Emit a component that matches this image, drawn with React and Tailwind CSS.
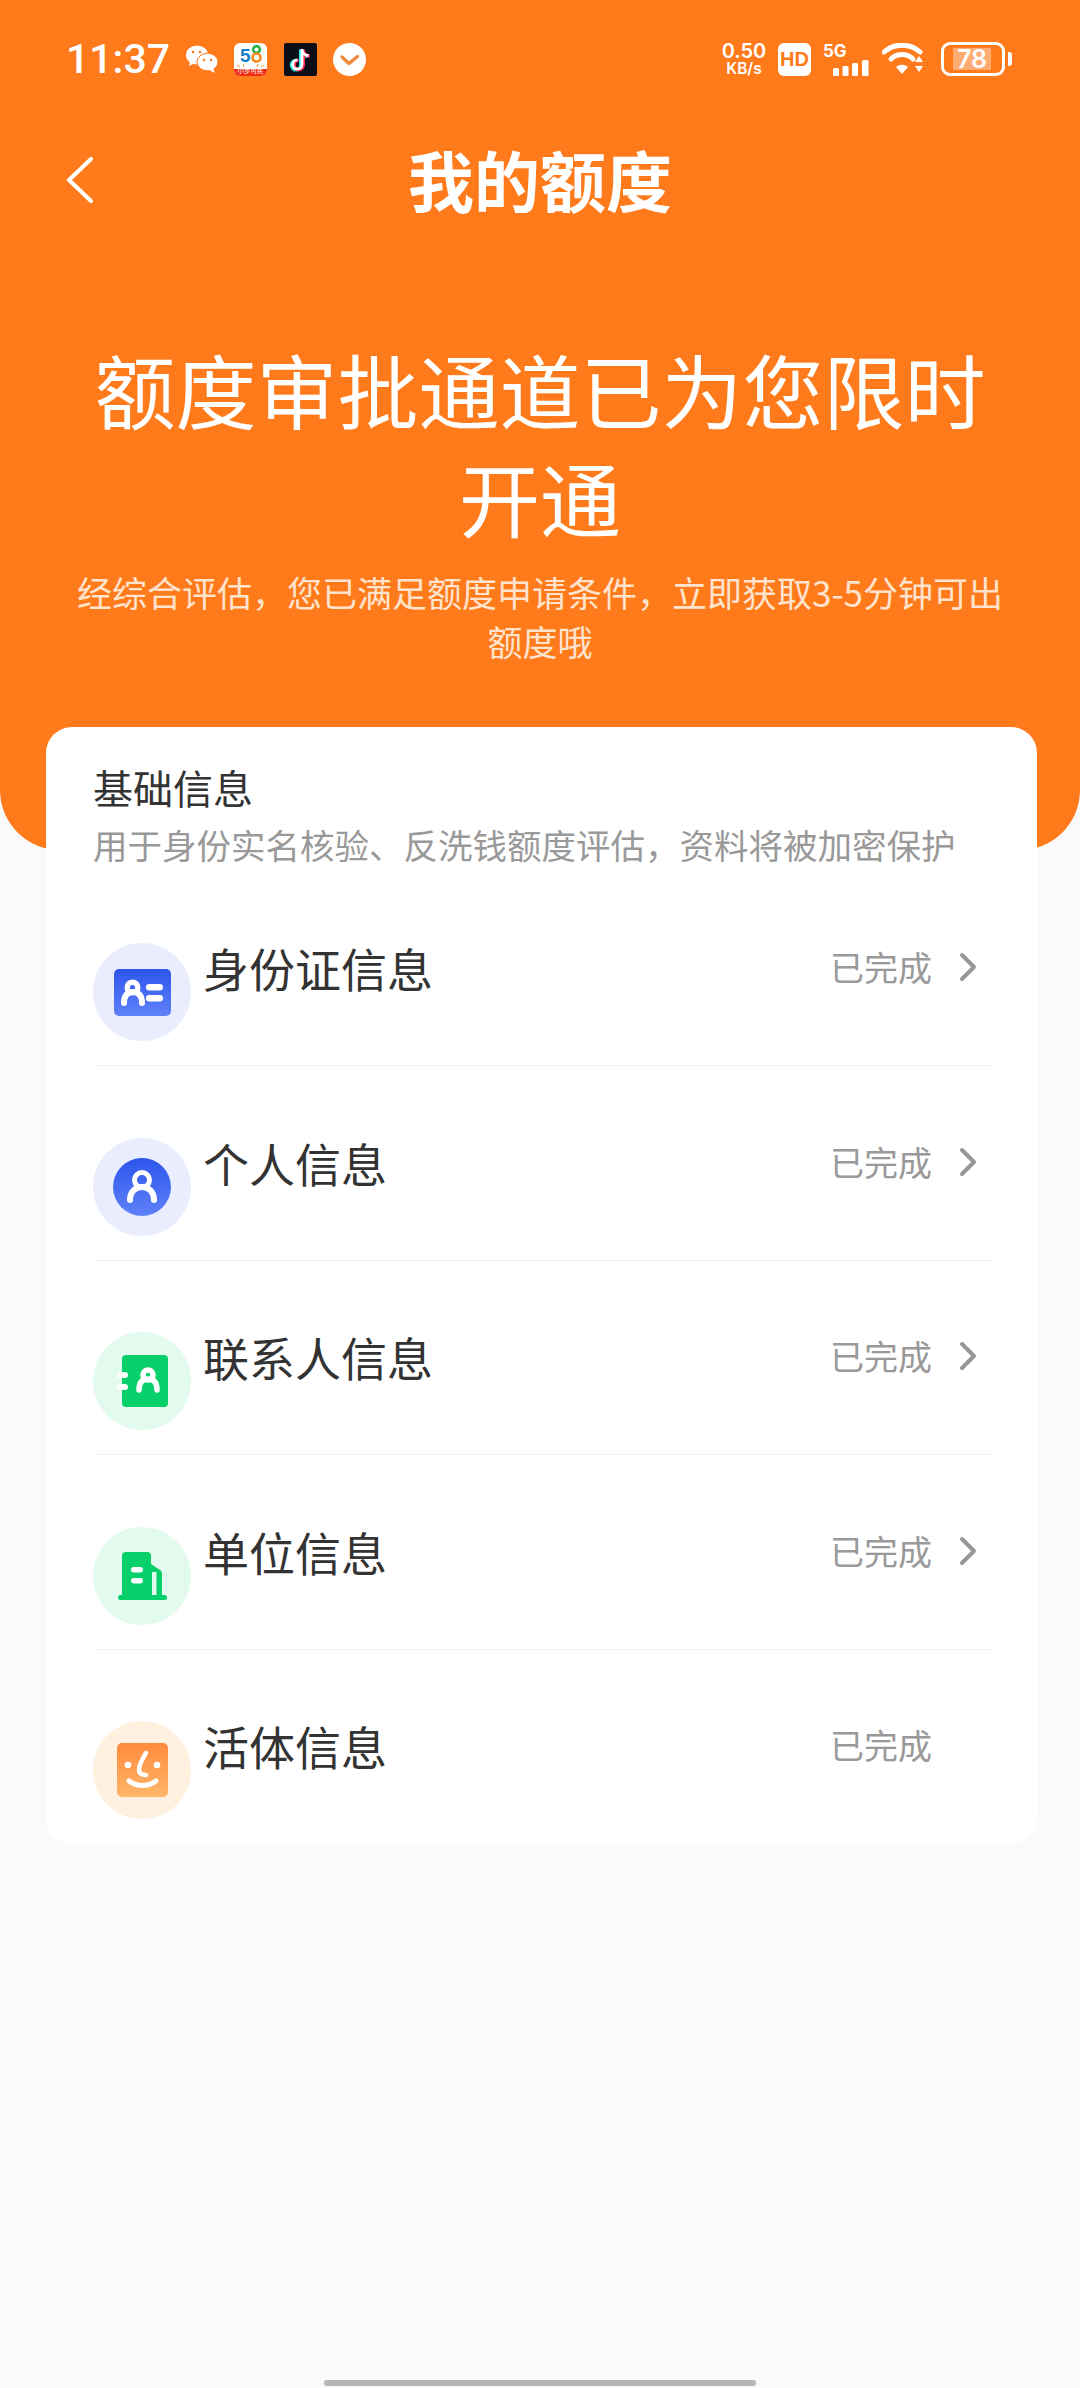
import React from 'react';

const IdIcon = () => (
  <svg width="57" height="47" viewBox="0 0 57 47" className="block">
    <defs>
      <linearGradient id="blueA" x1="0" y1="0" x2="0" y2="1">
        <stop offset="0" stopColor="#2d55ec" />
        <stop offset="1" stopColor="#5f82f9" />
      </linearGradient>
    </defs>
    <rect width="57" height="47" rx="5" fill="url(#blueA)" />
    <circle cx="18.5" cy="18.5" r="5.3" fill="none" stroke="#fff" strokeWidth="5.4" />
    <path d="M10 34c0-7 3-11 9-11s9 4 9 11" fill="none" stroke="#fff" strokeWidth="6" strokeLinecap="round" />
    <rect x="32" y="15" width="17" height="6.5" rx="3.2" fill="#fff" />
    <rect x="32" y="26" width="17" height="6.5" rx="3.2" fill="#fff" />
  </svg>
);

const PersonIcon = () => (
  <svg width="58" height="58" viewBox="0 0 58 58" className="block">
    <defs>
      <linearGradient id="blueB" x1="0" y1="0" x2="0" y2="1">
        <stop offset="0" stopColor="#2d55ec" />
        <stop offset="1" stopColor="#5f82f9" />
      </linearGradient>
    </defs>
    <circle cx="29" cy="29" r="29" fill="url(#blueB)" />
    <circle cx="29" cy="22" r="7.5" fill="none" stroke="#fff" strokeWidth="5" />
    <path d="M17 42c0-8 5-13 12-13s12 5 12 13" fill="none" stroke="#fff" strokeWidth="6" strokeLinecap="round" />
  </svg>
);

const ContactIcon = () => (
  <svg width="52" height="52" viewBox="0 0 52 52" className="block">
    <rect x="6" y="0" width="46" height="52" rx="4" fill="#07d06a" />
    <rect x="1" y="17" width="11" height="6" rx="3" fill="#fff" />
    <rect x="1" y="29" width="11" height="6" rx="3" fill="#fff" />
    <circle cx="32" cy="20" r="5" fill="none" stroke="#fff" strokeWidth="5.5" />
    <path d="M23 35c0-7 3-11 9-11s9 4 9 11" fill="none" stroke="#fff" strokeWidth="5.5" strokeLinecap="round" />
  </svg>
);

const BuildingIcon = () => (
  <svg width="49" height="48" viewBox="0 0 49 48" className="block">
    <path d="M4 4a4 4 0 0 1 4-4h21a4 4 0 0 1 4 4v8l9 6a4 4 0 0 1 2 4v22H4z" fill="#07d06a" />
    <rect x="0" y="43" width="49" height="5" rx="2.5" fill="#07d06a" />
    <rect x="13" y="15" width="12" height="5.5" rx="2.7" fill="#fff" />
    <rect x="13" y="26" width="12" height="5.5" rx="2.7" fill="#fff" />
    <rect x="34" y="20" width="4.5" height="23" fill="#e3fbef" />
  </svg>
);

const FaceIcon = () => (
  <svg width="51" height="54" viewBox="0 0 51 54" className="block">
    <defs>
      <linearGradient id="orangeA" x1="0" y1="0" x2="0" y2="1">
        <stop offset="0" stopColor="#ff8a3d" />
        <stop offset="1" stopColor="#ffb669" />
      </linearGradient>
    </defs>
    <rect width="51" height="54" rx="5" fill="url(#orangeA)" />
    <circle cx="11" cy="22" r="3.3" fill="#fff" />
    <circle cx="40" cy="22" r="3.3" fill="#fff" />
    <path d="M29 10c-3 5-7 11-7 17 0 3 2 5 7 5" fill="none" stroke="#fff" strokeWidth="4.5" strokeLinecap="round" />
    <path d="M12 38c8 6 19 6 27 0" fill="none" stroke="#fff" strokeWidth="5" strokeLinecap="round" />
  </svg>
);

const items = [
  { title: '身份证信息', bg: 'bg-[#e9edfd]', icon: <IdIcon />, arrow: true },
  { title: '个人信息', bg: 'bg-[#e9edfd]', icon: <PersonIcon />, arrow: true },
  { title: '联系人信息', bg: 'bg-[#e3fbef]', icon: <ContactIcon />, arrow: true },
  { title: '单位信息', bg: 'bg-[#e3fbef]', icon: <BuildingIcon />, arrow: true },
  { title: '活体信息', bg: 'bg-[#fff0e0]', icon: <FaceIcon />, arrow: false },
];

const StatusBar = () => (
  <div className="flex h-[36px] items-center justify-between pl-[66px] pr-[68px] text-white">
    <div className="flex items-center">
      <span className="w-[101px] text-[41px] leading-none font-medium font-['Roboto',sans-serif]">11:37</span>
      {/* wechat */}
      <svg width="32" height="30" viewBox="0 0 32 30" className="ml-[19px]">
        <ellipse cx="11" cy="11" rx="11" ry="9.5" fill="#fff" />
        <path d="M4 17l-1 5 6-3z" fill="#fff" />
        <ellipse cx="21.5" cy="18" rx="10.5" ry="8.8" fill="#fff" stroke="#ff7a1b" strokeWidth="1" />
        <path d="M27 24l2 5-6-3z" fill="#fff" />
        <circle cx="7" cy="8" r="1.3" fill="#ff7a1b" />
        <circle cx="14" cy="8" r="1.3" fill="#ff7a1b" />
        <circle cx="18" cy="16" r="1.2" fill="#ff7a1b" />
        <circle cx="25" cy="16" r="1.2" fill="#ff7a1b" />
      </svg>
      {/* 58 app */}
      <svg width="33" height="33" viewBox="0 0 33 33" className="ml-[16px]">
        <rect width="33" height="33" rx="6" fill="#fff" />
        <path d="M0 26h33v1a6 6 0 0 1-6 6H6a6 6 0 0 1-6-6z" fill="#ee2d14" />
        <text x="6" y="19" fontSize="19" fontWeight="700" fill="#1580c8" fontFamily="Liberation Sans, sans-serif">5</text>
        <circle cx="22.5" cy="6.5" r="3.4" fill="none" stroke="#28b34a" strokeWidth="2.6" />
        <circle cx="22.5" cy="14.5" r="4" fill="none" stroke="#f28a1e" strokeWidth="2.6" />
        <path d="M3 22l3 2M30 22l-3 2M9 21l1 3M24 21l-1 3" stroke="#e8a23c" strokeWidth="1" />
        <text x="16.5" y="30" fontSize="6.5" fill="#fff" textAnchor="middle" fontFamily="Noto Sans CJK SC, sans-serif">小步可民</text>
      </svg>
      {/* tiktok */}
      <svg width="33" height="33" viewBox="0 0 33 33" className="ml-[17px]">
        <rect width="33" height="33" rx="2" fill="#0b0d17" />
        <path d="M18 6v15.5a4.6 4.6 0 1 1-4.6-4.6M18 6c0 4 3 6.5 6.5 6.5" fill="none" stroke="#25f4ee" strokeWidth="3.6" transform="translate(-1.2 0.6)" />
        <path d="M18 6v15.5a4.6 4.6 0 1 1-4.6-4.6M18 6c0 4 3 6.5 6.5 6.5" fill="none" stroke="#fe2c55" strokeWidth="3.6" transform="translate(1.2 0.4)" />
        <path d="M18 6v15.5a4.6 4.6 0 1 1-4.6-4.6M18 6c0 4 3 6.5 6.5 6.5" fill="none" stroke="#fff" strokeWidth="2.8" />
      </svg>
      {/* check */}
      <svg width="33" height="33" viewBox="0 0 33 33" className="ml-[16px]">
        <circle cx="16.5" cy="16.5" r="16.5" fill="#fff" />
        <path d="M9 14l7 6.5 8.5-7" fill="none" stroke="#f08a3c" strokeWidth="3.4" strokeLinecap="round" strokeLinejoin="round" />
      </svg>
    </div>
    <div className="flex items-center">
      <div className="flex w-[44px] flex-col items-center font-['Inter',sans-serif] font-semibold">
        <span className="text-[20px] leading-[20px]">0.50</span>
        <span className="text-[15.5px] leading-[16px]">KB/s</span>
      </div>
      <div className="ml-[12px] flex h-[33px] w-[33px] items-center justify-center rounded-[6px] bg-white text-[20px] leading-none font-bold text-[#ff7a1b] font-['Liberation_Sans',sans-serif]">HD</div>
      {/* 5G + signal */}
      <div className="relative ml-[12px] h-[33px] w-[46px]">
        <span className="absolute left-0 top-0 text-[17px] leading-[17px] font-bold font-['Inter',sans-serif]">5G</span>
        <svg width="36" height="16" viewBox="0 0 36 16" className="absolute bottom-0 right-0">
          <rect x="0" y="8" width="6" height="8" rx="1.5" fill="#fff" />
          <rect x="9.5" y="6" width="6" height="10" rx="1.5" fill="#fff" />
          <rect x="19" y="3" width="6" height="13" rx="1.5" fill="#fff" />
          <rect x="29" y="0" width="6.5" height="16" rx="1.5" fill="#fff" />
        </svg>
      </div>
      {/* wifi */}
      <svg width="43" height="32" viewBox="0 0 43 32" className="ml-[13px]">
        <path d="M2 9c10-9 26-9 36 0" fill="none" stroke="#fff" strokeWidth="5" strokeLinecap="round" />
        <path d="M9 16c6-6 16-6 22 0" fill="none" stroke="#fff" strokeWidth="5" strokeLinecap="round" />
        <path d="M14 24c4-3 8-3 12 0l-6 7z" fill="#fff" />
        <path d="M37 13l4 6h-8zM33 23h8l-4 6z" fill="#fff" />
      </svg>
      {/* battery */}
      <div className="ml-[16px] flex items-center">
        <div className="flex h-[34px] w-[64px] items-center rounded-[9px] border-[3px] border-white pl-[9px]">
          <div className="flex h-[22px] w-[38px] items-center justify-center bg-[#ffac73] text-[25px] leading-none font-semibold font-['Inter',sans-serif]">78</div>
        </div>
        <div className="ml-[3px] h-[14px] w-[4px] rounded-r-[3px] bg-white" />
      </div>
    </div>
  </div>
);

export default function App() {
  return (
    <div className="relative flex min-h-[2388px] flex-col bg-[#fafafa] font-['Noto_Sans_CJK_SC','Noto_Sans',sans-serif]">
      {/* Orange header */}
      <div className="h-[850px] rounded-b-[60px] bg-[#ff7a1b] pt-[41px] text-white">
        <StatusBar />
        <div className="relative mt-[54px] flex h-[94px] items-center justify-center">
          <svg width="28" height="46" viewBox="0 0 28 46" className="absolute left-[66px] top-[26px]">
            <path d="M25 2L3 23l22 21" fill="none" stroke="#fff" strokeWidth="4" strokeLinecap="round" strokeLinejoin="round" />
          </svg>
          <h1 className="text-[66px] leading-none font-bold">我的额度</h1>
        </div>
        <div className="mt-[109px] px-[60px] text-center">
          <h2 className="px-[20px] text-[81px] leading-[108px] font-normal">额度审批通道已为您限时开通</h2>
          <p className="mt-[17px] text-[35px] leading-[49px] text-[#ffe3cd]">经综合评估，您已满足额度申请条件，立即获取3-5分钟可出额度哦</p>
        </div>
      </div>

      {/* Card */}
      <div className="relative ml-[46px] mr-[43px] -mt-[123px] rounded-[26px] bg-white pl-[47px] pr-[45px] pb-[25px]">
        <div className="h-[144.5px] pt-[35px]">
          <div className="text-[40px] leading-[50px] text-[#333]">基础信息</div>
          <div className="mt-[7px] text-[34.5px] leading-[50px] whitespace-nowrap text-[#999]">用于身份实名核验、反洗钱额度评估，资料将被加密保护</div>
        </div>
        {items.map((item, i) => (
          <div
            key={item.title}
            className={i < items.length - 1 ? 'flex items-start border-b border-[#f1f1f1] pt-[71.5px] pb-[24px]' : 'flex items-start pt-[71.5px]'}
          >
            <div className={`flex h-[98px] w-[98px] shrink-0 items-center justify-center rounded-full ${item.bg}`}>
              {item.icon}
            </div>
            <div className="-mt-[1px] ml-[12px] flex h-[50px] flex-1 items-center justify-between pr-[14px]">
              <span className="text-[46px] leading-none text-[#333]">{item.title}</span>
              <div className="flex items-center">
                <span className="text-[34px] leading-none text-[#999]">已完成</span>
                <div className="ml-[26px] w-[20px]">
                  {item.arrow && (
                    <svg width="20" height="30" viewBox="0 0 20 30" className="block">
                      <path d="M4 3l12 12L4 27" fill="none" stroke="#969696" strokeWidth="4" strokeLinecap="round" strokeLinejoin="round" />
                    </svg>
                  )}
                </div>
              </div>
            </div>
          </div>
        ))}
      </div>

      {/* Home indicator */}
      <div className="absolute bottom-[2px] left-[324px] h-[6px] w-[432px] rounded-full bg-[#b5b5b5]" />
    </div>
  );
}
